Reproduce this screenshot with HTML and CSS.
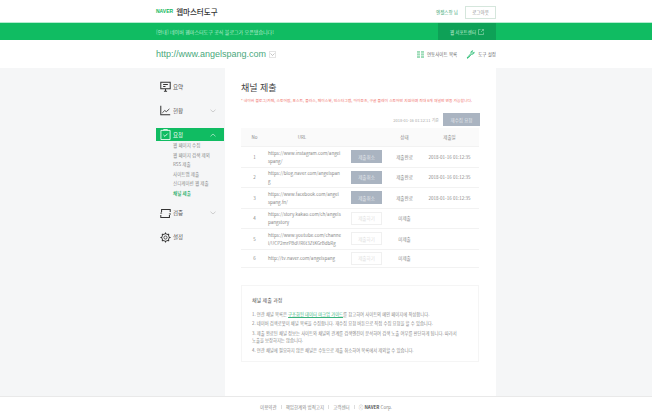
FILE: index.html
```html
<!DOCTYPE html>
<html lang="ko">
<head>
    <meta charset="UTF-8">
    <title>네이버 웹마스터도구</title>
    <link rel="stylesheet" href="styles.css">
</head>
<body>
    <header class="top">
        <div class="wrap top-inner">
            <div class="logo"><span class="naver">NAVER</span><span class="logo-name">웹마스터도구</span></div>
            <div class="user">
                <span class="user-name">엔젤스팡 님</span>
                <button class="logout">로그아웃</button>
            </div>
        </div>
    </header>
    <div class="notice">
        <div class="wrap notice-inner">
            <span class="notice-text">[안내] 네이버 웹마스터도구 공식 블로그가 오픈됐습니다!</span>
            <span class="support">웹 서포트센터
                <svg width="6" height="6" viewBox="0 0 6 6"><path d="M5.500 3.500v2h-5v-5h2M3 3l2.500-2.500M3.800.5h1.700v1.700" fill="none" stroke="#9fdcb9" stroke-width=".6"/></svg>
            </span>
        </div>
    </div>
    <div class="site-bar">
        <div class="wrap site-inner">
            <div class="site">
                <span class="site-url">http://www.angelspang.com</span>
                <span class="site-arrow"><svg width="5" height="3" viewBox="0 0 5 3"><path d="M.5.5l2 2 2-2" fill="none" stroke="#aaa" stroke-width=".7"/></svg></span>
            </div>
            <div class="tools">
                <span class="tool">
                    <svg class="tool-list" width="7" height="7" viewBox="0 0 7 7"><path d="M0 0h3v7H0zM4 0h3v7H4z" fill="#9ddcb8"/><path d="M0 2.200h7M0 4.600h7" stroke="#fff" stroke-width=".5"/></svg>
                    연동사이트 목록
                </span>
                <span class="tool">
                    <svg width="9" height="9" viewBox="0 0 9 9"><path d="M1 8l4-4.600c-.3-1 .2-2.400 1.600-2.700L5.700 2.300 6.900 3.300 8.200 2.200c-.1 1.500-1.400 2.300-2.700 2L2 8.200z" fill="none" stroke="#19b868" stroke-width=".8"/></svg>
                    도구 설정
                </span>
            </div>
        </div>
    </div>

    <div class="middle">
        <div class="wrap layout">
            <nav class="side">
                <a class="menu">
                    <svg class="menu-icon" width="11" height="11" viewBox="0 0 14 14"><path d="M1 1.500h12v8.500H1zM7 10v3.500M5 13h4M4 4.500h6M4 7h3" fill="none" stroke="#333" stroke-width="1.300"/></svg>
                    <span>요약</span>
                </a>
                <a class="menu">
                    <svg class="menu-icon" width="11" height="11" viewBox="0 0 14 14"><path d="M1 1v11.500h12" fill="none" stroke="#333" stroke-width="1.300"/><path d="M3 10l3-3 2 1.500 4-3.500" fill="none" stroke="#333" stroke-width="1.100"/></svg>
                    <span>현황</span>
                    <svg class="chev" width="6" height="4" viewBox="0 0 6 4"><path d="M.5.700L3 3 5.500.700" fill="none" stroke="#bbb" stroke-width=".7"/></svg>
                </a>
                <a class="menu menu-on">
                    <svg class="menu-icon" width="11" height="11" viewBox="0 0 12 12"><path d="M1 1.500h10v10H1zM4 1.500V.5h4v1M3.800 6.500l1.600 1.500 3-3" fill="none" stroke="#fff" stroke-width=".9"/></svg>
                    <span>요청</span>
                    <svg class="chev" width="6" height="4" viewBox="0 0 6 4"><path d="M.5 3.300L3 1l2.500 2.300" fill="none" stroke="#c9f0d9" stroke-width=".7"/></svg>
                </a>
                <ul class="sub">
                    <li>웹 페이지 수집</li>
                    <li>웹 페이지 검색 제외</li>
                    <li>RSS 제출</li>
                    <li>사이트맵 제출</li>
                    <li>신디케이션 웹 제출</li>
                    <li class="sub-on">채널 제출</li>
                </ul>
                <a class="menu">
                    <svg class="menu-icon" width="11" height="11" viewBox="0 0 14 14"><path d="M1 9v3h11V9M13 5V2H2v3" fill="none" stroke="#333" stroke-width="1.300"/><path d="M0 7l1.500-2L3 7zM11 7l2 2 1-2z" fill="#333"/></svg>
                    <span>검증</span>
                    <svg class="chev" width="6" height="4" viewBox="0 0 6 4"><path d="M.5.700L3 3 5.500.700" fill="none" stroke="#bbb" stroke-width=".7"/></svg>
                </a>
                <a class="menu">
                    <svg class="menu-icon" width="11" height="11" viewBox="0 0 14 14"><circle cx="7" cy="7" r="2" fill="none" stroke="#333"/><circle cx="7" cy="7" r="4.800" fill="none" stroke="#333" stroke-width="1.200"/><path d="M7 .5v2M7 11.500v2M.5 7h2M11.500 7h2M2.400 2.400l1.400 1.400M10.200 10.200l1.400 1.400M11.600 2.400l-1.400 1.400M3.800 10.200l-1.400 1.400" stroke="#333" stroke-width="1.300"/></svg>
                    <span>설정</span>
                </a>
            </nav>

            <main class="content">
                <h1 class="title">채널 제출</h1>
                <p class="warn">* 네이버 블로그/카페, 스토어팜, 포스트, 플러스, 페이스북, 인스타그램, 아이튠즈, 구글 플레이 스토어만 지원하며 최대 6개 채널만 연동 가능합니다.</p>
                <div class="table-top">
                    <span class="stamp">2018-01-16 01:12:11 기준</span>
                    <button class="btn btn-gray btn-wide">재수집 요청</button>
                </div>
                <table class="channels">
                    <thead>
                        <tr><th class="c-no">No</th><th class="c-url">URL</th><th class="c-btn"></th><th class="c-state">상태</th><th class="c-date">제출일</th></tr>
                    </thead>
                    <tbody>
                        <tr class="r1"><td>1</td><td class="url">https://www.instagram.com/angel<br>spang/</td><td><button class="btn btn-gray">제출취소</button></td><td>제출완료</td><td class="date">2018-01-16 01:12:35</td></tr>
                        <tr class="r2"><td>2</td><td class="url">https://blog.naver.com/angelspan<br>g</td><td><button class="btn btn-gray">제출취소</button></td><td>제출완료</td><td class="date">2018-01-16 01:12:35</td></tr>
                        <tr class="r3"><td>3</td><td class="url">https://www.facebook.com/angel<br>spang.fn/</td><td><button class="btn btn-gray">제출취소</button></td><td>제출완료</td><td class="date">2018-01-16 01:12:35</td></tr>
                        <tr class="r4"><td>4</td><td class="url">https://story.kakao.com/ch/angels<br>pangstory</td><td><button class="btn btn-off">제출하기</button></td><td>미제출</td><td></td></tr>
                        <tr class="r5"><td>5</td><td class="url">https://www.youtube.com/channe<br>l/UCP2mrPBdUR6t3ZtKGrBdbRg</td><td><button class="btn btn-off">제출하기</button></td><td>미제출</td><td></td></tr>
                        <tr class="r6"><td>6</td><td class="url">http://tv.naver.com/angelspang</td><td><button class="btn btn-off">제출하기</button></td><td>미제출</td><td></td></tr>
                    </tbody>
                </table>
                <section class="process">
                    <h2>채널 제출 과정</h2>
                    <ol>
                        <li>1. 연관 채널 목록은 <a>구조화된 데이터 마크업 가이드</a>를 참고하여 사이트의 메인 페이지에 작성합니다.</li>
                        <li>2. 네이버 검색로봇이 채널 목록을 수집합니다. 재수집 요청 버튼으로 직접 수집 요청을 할 수 있습니다.</li>
                        <li>3. 제출 완료된 채널 정보는 사이트와 채널의 관계를 검색엔진이 분석하여 검색 노출 여부를 판단하게 됩니다. 따라서<br>노출을 보장하지는 않습니다.</li>
                        <li>4. 연관 채널에 필요하지 않은 채널은 수동으로 제출 취소하여 목록에서 제외할 수 있습니다.</li>
                    </ol>
                </section>
            </main>
        </div>
    </div>

    <footer class="foot">
        <a>이용약관</a><i></i><a>책임한계와 법적고지</a><i></i><a>고객센터</a><i></i><span>ⓒ <b>NAVER</b> Corp.</span>
    </footer>
</body>
</html>
```

FILE: styles.css
```css
* {
    box-sizing: border-box;
}
body {
    margin: 0;
    height: 417px;
    overflow: hidden;
    background: #fff;
    font-family: "Noto Sans CJK KR", "Liberation Sans", sans-serif;
    color: #555;
}
.wrap {
    width: 340px;
    margin-left: 156px;
}
.top {
    height: 23px;
    border-bottom: 1px solid #b5ecd0;
}
.top-inner {
    height: 22px;
    display: flex;
    align-items: center;
    justify-content: space-between;
    padding-top: 2px;
}
.logo {
    display: flex;
    align-items: center;
    margin-top: -2px;
}
.naver {
    font: bold 5px "Liberation Sans", sans-serif;
    color: #12b85e;
    margin-right: 3px;
}
.logo-name {
    font-size: 7.500px;
    font-weight: 500;
    color: #333;
}
.user {
    display: flex;
    align-items: center;
    gap: 7px;
}
.user-name {
    font-size: 4.500px;
    color: #3aa877;
}
.logout {
    width: 31px;
    height: 13px;
    padding: 0;
    background: #fff;
    border: 1px solid #d5e6dc;
    font: 4.500px "Noto Sans CJK KR", sans-serif;
    color: #888;
}
.notice {
    height: 17px;
    background: #10bc62;
}
.notice-inner {
    height: 17px;
    display: flex;
    align-items: center;
    justify-content: space-between;
}
.notice-text {
    font-size: 5px;
    color: #b9ecd0;
}
.support {
    width: 58px;
    height: 17px;
    display: flex;
    align-items: center;
    justify-content: center;
    gap: 2px;
    background: #0ea157;
    font-size: 4.500px;
    color: #c9efda;
}
.site-bar {
    height: 28px;
}
.site-inner {
    height: 28px;
    display: flex;
    align-items: center;
    justify-content: space-between;
}
.site {
    display: flex;
    align-items: center;
    gap: 3px;
}
.site-url {
    font: 9px "Liberation Sans", sans-serif;
    color: #4aa87c;
}
.site-arrow {
    width: 7px;
    height: 7px;
    border: 1px solid #e4e4e4;
    display: flex;
    align-items: center;
    justify-content: center;
}
.tools {
    display: flex;
    gap: 9px;
}
.tool {
    display: flex;
    align-items: center;
    gap: 3px;
    font-size: 4.500px;
    color: #666;
}
.middle {
    height: 329px;
    background: #f5f6f7;
    border-bottom: 1px solid #e9e9e9;
}
.layout {
    display: flex;
    height: 328px;
}
.side {
    width: 69px;
    padding-top: 12px;
}
.menu {
    display: flex;
    align-items: center;
    height: 13px;
    margin-bottom: 11px;
    padding-left: 4px;
    font-size: 5.500px;
    color: #555;
}
.menu-icon {
    margin-right: 2px;
    flex: none;
}
.chev {
    margin-left: auto;
    margin-right: 9px;
}
.menu-on {
    background: #10bc62;
    color: #fff;
    margin-bottom: 0;
    margin-right: 1px;
}
.menu-on .chev {
    margin-right: 8px;
}
.sub {
    list-style: none;
    margin: 0 0 8.500px;
    padding: 0 0 0 17px;
}
.sub li {
    height: 9.500px;
    line-height: 9.500px;
    font-size: 4.500px;
    color: #888;
}
.sub .sub-on {
    color: #10a85a;
    font-weight: 500;
}
.content {
    width: 271px;
    padding: 13px 16px 0;
    background: #fff;
}
.title {
    margin: 0;
    height: 14px;
    line-height: 14px;
    font-size: 9px;
    font-weight: 400;
    color: #444;
}
.warn {
    margin: 2px 0 0;
    height: 8px;
    line-height: 8px;
    font-size: 3.800px;
    white-space: nowrap;
    color: #f0706a;
}
.table-top {
    display: flex;
    align-items: center;
    justify-content: flex-end;
    gap: 4px;
    height: 13px;
    margin-top: 8px;
}
.stamp {
    font-size: 4px;
    color: #aaa;
}
.btn {
    width: 31px;
    height: 13px;
    padding: 0;
    border: 1px solid transparent;
    font: 4.500px "Noto Sans CJK KR", sans-serif;
}
.btn-wide {
    width: 37px;
}
.btn-gray {
    background: #aab4c1;
    color: #e4e8ec;
}
.btn-off {
    background: #fff;
    border-color: #f0f0f0;
    color: #ddd;
}
.channels {
    width: 238px;
    margin-top: 2px;
    border-collapse: collapse;
    table-layout: fixed;
    font-size: 4.500px;
    color: #888;
}
.channels th {
    height: 18px;
    padding: 0;
    background: #fafafa;
    font-weight: 400;
    text-align: center;
    border-bottom: 1px solid #f2f2f2;
}
.channels .c-url {
    padding-right: 10px;
}
.channels td {
    padding: 0;
    text-align: center;
    border-bottom: 1px solid #f2f2f2;
}
.channels .url {
    text-align: left;
    line-height: 8px;
}
.channels .date {
    padding-right: 2px;
}
.channels .c-date {
    padding-right: 2px;
}
.c-no { width: 27px; }
.c-url { width: 78px; }
.c-btn { width: 41px; }
.c-state { width: 35px; }
.c-date { width: 57px; }
.r1 td, .r3 td, .r5 td { height: 21px; }
.r2 td, .r4 td { height: 20px; }
.r6 td { height: 18px; }
.process {
    width: 238px;
    height: 77px;
    margin-top: 17px;
    padding: 10px 10px 0;
    border: 1px solid #f5f5f5;
}
.process h2 {
    margin: 0 0 7px;
    height: 8px;
    line-height: 8px;
    font-size: 5px;
    font-weight: 400;
    color: #555;
}
.process ol {
    margin: 0;
    padding: 0;
    list-style: none;
    font-size: 4.300px;
    line-height: 7.500px;
    color: #888;
}
.process li {
    margin-bottom: 2px;
    white-space: nowrap;
}
.process a {
    color: #3ab37c;
    text-decoration: underline;
}
.foot {
    display: flex;
    align-items: center;
    justify-content: center;
    gap: 4px;
    height: 20px;
    font-size: 4.500px;
    color: #888;
}
.foot i {
    width: 1px;
    height: 4px;
    background: #ddd;
}
.foot b {
    color: #555;
}
```
